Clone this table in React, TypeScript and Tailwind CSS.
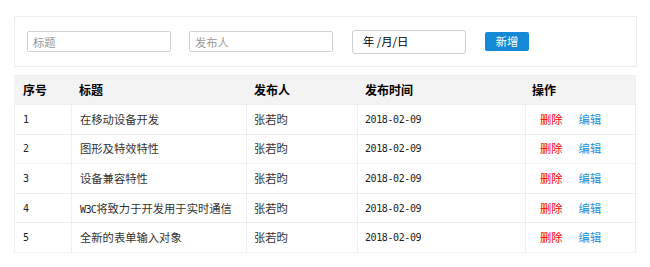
import React from "react";

const rows = [
  { id: 1, title: "在移动设备开发", author: "张若昀", date: "2018-02-09" },
  { id: 2, title: "图形及特效特性", author: "张若昀", date: "2018-02-09" },
  { id: 3, title: "设备兼容特性", author: "张若昀", date: "2018-02-09" },
  { id: 4, title: "W3C将致力于开发用于实时通信", author: "张若昀", date: "2018-02-09" },
  { id: 5, title: "全新的表单输入对象", author: "张若昀", date: "2018-02-09" },
];

const cjk = "font-['SimSun','Noto_Sans_CJK_SC',sans-serif]";
const mono = "font-['DejaVu_Sans_Mono','Noto_Sans_CJK_SC',monospace]";
const cols = "grid grid-cols-[56px_175px_111px_168px_112px]";

export default function App() {
  return (
    <div className={`w-[650px] h-[267px] bg-white pt-4 pl-[14px] text-[11.3px] text-[#333] ${cjk}`}>
      <div className="w-[623px] h-[51px] border border-[#ececec] flex items-center pl-3">
        <input
          placeholder="标题"
          className="w-[144px] h-[21px] border border-[#d0d0d0] rounded-[2px] px-[5px] text-[11.3px] placeholder:text-[#999] outline-none"
        />
        <input
          placeholder="发布人"
          className="ml-[18px] w-[144px] h-[21px] border border-[#d0d0d0] rounded-[2px] px-[5px] text-[11.3px] placeholder:text-[#999] outline-none"
        />
        <div className="ml-[19px] w-[114px] h-[24px] border border-[#cdcdcd] rounded-[3px] flex items-center pl-[10px] text-[11.3px] text-black">
          年 /月/日
        </div>
        <button className="ml-[19px] w-[44px] h-[19px] bg-[#1589d6] rounded-[2px] text-white text-[11.3px] leading-none">
          新增
        </button>
      </div>

      <div className="mt-[8px] w-[622px] border border-[#efefef]">
        <div className={`${cols} h-[28px] bg-[#f3f3f3] font-bold text-black text-[12px]`}>
          <div className="flex items-center pl-[8px]">序号</div>
          <div className="flex items-center pl-[8px]">标题</div>
          <div className="flex items-center pl-[8px]">发布人</div>
          <div className="flex items-center pl-[8px]">发布时间</div>
          <div className="flex items-center pl-[7px]">操作</div>
        </div>
        {rows.map((r) => (
          <div key={r.id} className={`${cols} h-[29.6px] border-t border-[#eeeeee]`}>
            <div className={`flex items-center pl-[8px] text-[10px] text-[#222] ${mono}`}>{r.id}</div>
            <div className="flex items-center pl-[8px] border-l border-[#eeeeee]">
              {r.id === 4 ? (
                <span>
                  <span className={`text-[10px] tracking-[-0.6px] text-[#222] ${mono}`}>W3C</span>
                  将致力于开发用于实时通信
                </span>
              ) : (
                r.title
              )}
            </div>
            <div className="flex items-center pl-[7px] border-l border-[#eeeeee]">{r.author}</div>
            <div className={`flex items-center pl-[7px] border-l border-[#eeeeee] text-[10px] tracking-[-0.4px] text-[#222] ${mono}`}>{r.date}</div>
            <div className="flex items-center pl-[14px] gap-4 border-l border-[#eeeeee]">
              <a className="text-[#ff0000]">删除</a>
              <a className="text-[#1e90e0]">编辑</a>
            </div>
          </div>
        ))}
      </div>
    </div>
  );
}
